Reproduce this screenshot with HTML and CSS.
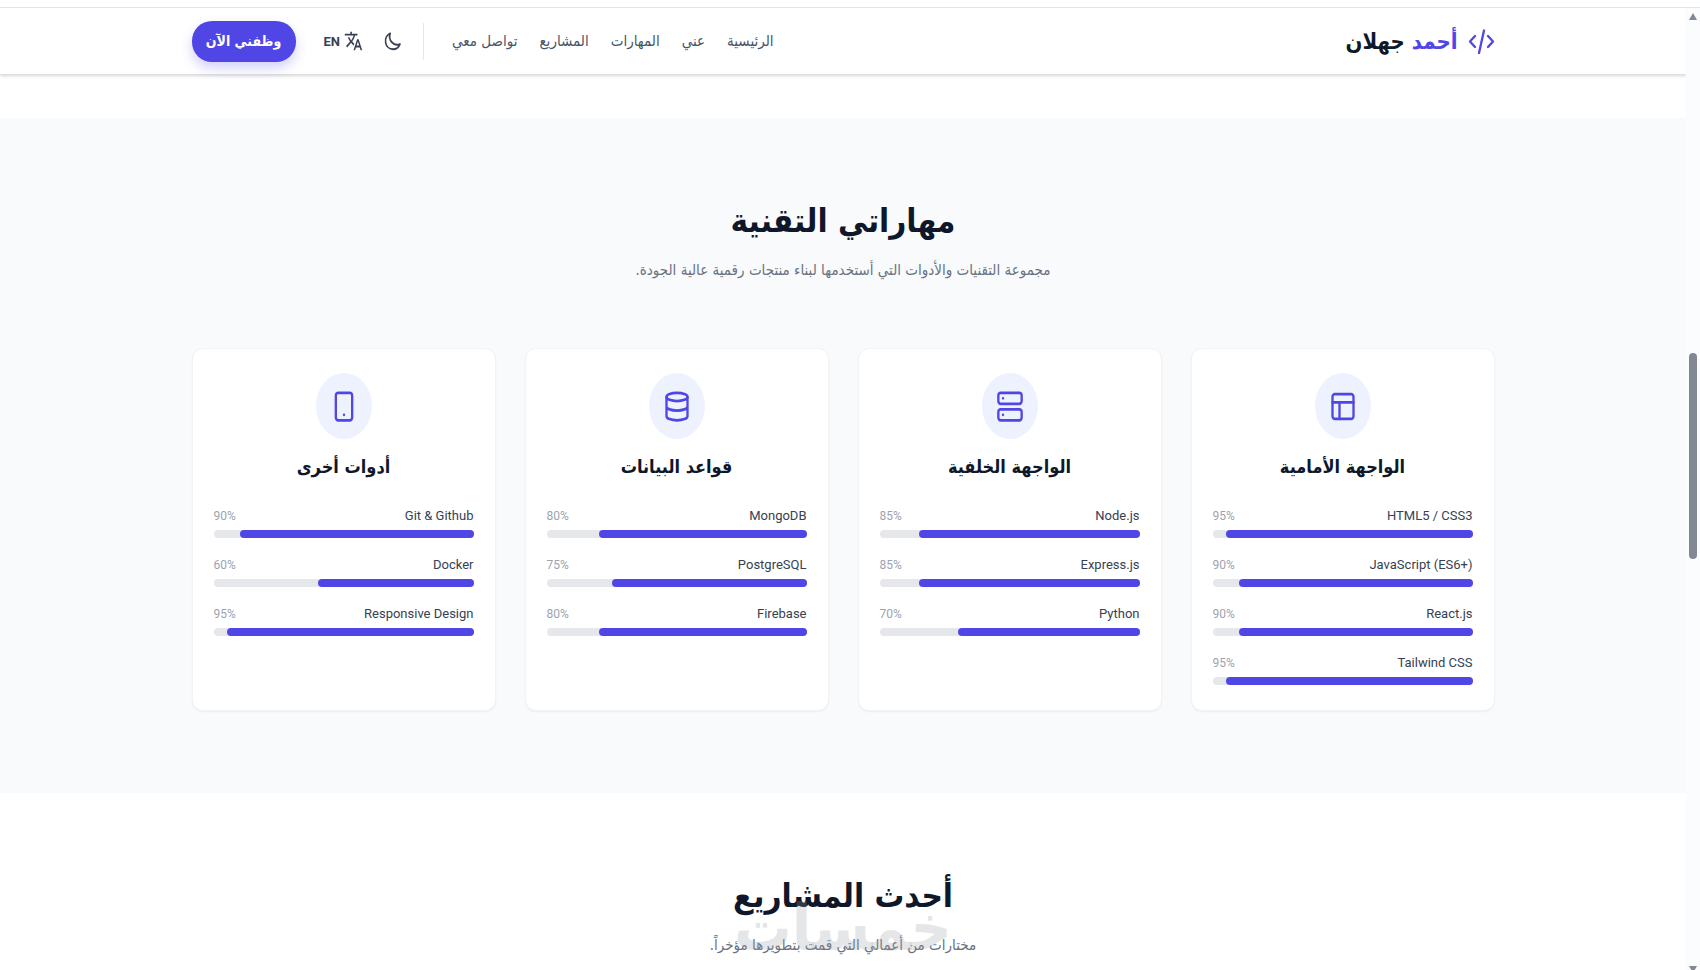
FILE: index.html
```
<!DOCTYPE html>
<html lang="ar" dir="rtl">
<head>
    <meta charset="UTF-8">
    <meta name="viewport" content="width=device-width, initial-scale=1.0">
    <title>أحمد جهلان</title>

    <link rel="stylesheet" href="styles.css">
</head>
<body>
    <div class="window-top"></div>

    <div class="window">
        <div class="page">
            <header class="header">
                <div class="container header-inner">
                    <a href="#" class="logo">
                        <svg class="logo-icon" viewBox="0 0 27 25" fill="none" stroke="currentColor" stroke-width="2.300" stroke-linecap="round" stroke-linejoin="round">
                            <path d="M7 7L2 12.500L7 18M20 7L25 12.500L20 18M16 1.500L11 24"/>
                        </svg>
                        <span><span class="logo-first">أحمد</span> جهلان</span>
                    </a>

                    <div class="header-left">
                        <nav class="nav">
                            <a href="#">الرئيسية</a>
                            <a href="#">عني</a>
                            <a href="#">المهارات</a>
                            <a href="#">المشاريع</a>
                            <a href="#">تواصل معي</a>
                        </nav>
                        <div class="tools">
                            <button type="button" class="icon-btn" aria-label="الوضع الليلي">
                                <svg class="moon" viewBox="0 0 24 24" fill="none" stroke="currentColor" stroke-width="2" stroke-linejoin="round" preserveAspectRatio="none">
                                    <path d="M20.354 15.354A9 9 0 0 1 8.646 3.646 9 9 0 0 0 12 21a9 9 0 0 0 8.354-5.646z"/>
                                </svg>
                            </button>
                            <button type="button" class="icon-btn">
                                <svg class="translate" viewBox="0 0 24 24" fill="currentColor" preserveAspectRatio="none">
                                    <path d="M12.870 15.070l-2.540-2.510.030-.030A17.520 17.520 0 0 0 14.070 6H17V4h-7V2H8v2H1v1.990h11.170C11.500 7.920 10.440 9.750 9 11.350 8.070 10.320 7.300 9.190 6.690 8h-2c.730 1.630 1.730 3.170 2.980 4.560l-5.090 5.020L4 19l5-5 3.110 3.110.760-2.040zM18.500 10h-2L12 22h2l1.120-3h4.750L21 22h2l-4.500-12zm-2.620 7l1.620-4.330L19.120 17h-3.240z"/>
                                </svg>
                                <span>EN</span>
                            </button>
                        </div>
                        <button type="button" class="hire-btn">وظفني الآن</button>
                    </div>
                </div>
            </header>

            <section class="skills">
                <div class="container">
                    <div class="section-head">
                        <h2>مهاراتي التقنية</h2>
                        <p>مجموعة التقنيات والأدوات التي أستخدمها لبناء منتجات رقمية عالية الجودة.</p>
                    </div>

                    <div class="cards">
                        <article class="card">
                            <div class="card-icon">
                                <svg viewBox="0 0 24 24" preserveAspectRatio="none">
                                    <rect x="3" y="3" width="18" height="18" rx="2"/>
                                    <path d="M3 9h18M9 9v12"/>
                                </svg>
                            </div>
                            <h3>الواجهة الأمامية</h3>
                            <ul class="skill-list">
                                <li>
                                    <div class="skill-label"><bdi>HTML5 / CSS3</bdi><bdi class="percent">95%</bdi></div>
                                    <div class="bar"><div class="bar-fill" style="width: 95%"></div></div>
                                </li>
                                <li>
                                    <div class="skill-label"><bdi>JavaScript (ES6+)</bdi><bdi class="percent">90%</bdi></div>
                                    <div class="bar"><div class="bar-fill" style="width: 90%"></div></div>
                                </li>
                                <li>
                                    <div class="skill-label"><bdi>React.js</bdi><bdi class="percent">90%</bdi></div>
                                    <div class="bar"><div class="bar-fill" style="width: 90%"></div></div>
                                </li>
                                <li>
                                    <div class="skill-label"><bdi>Tailwind CSS</bdi><bdi class="percent">95%</bdi></div>
                                    <div class="bar"><div class="bar-fill" style="width: 95%"></div></div>
                                </li>
                            </ul>
                        </article>

                        <article class="card">
                            <div class="card-icon">
                                <svg viewBox="0 0 24 24" preserveAspectRatio="none">
                                    <rect x="2" y="2" width="20" height="8" rx="2"/>
                                    <rect x="2" y="14" width="20" height="8" rx="2"/>
                                    <path d="M6 6h.01M6 18h.01"/>
                                </svg>
                            </div>
                            <h3>الواجهة الخلفية</h3>
                            <ul class="skill-list">
                                <li>
                                    <div class="skill-label"><bdi>Node.js</bdi><bdi class="percent">85%</bdi></div>
                                    <div class="bar"><div class="bar-fill" style="width: 85%"></div></div>
                                </li>
                                <li>
                                    <div class="skill-label"><bdi>Express.js</bdi><bdi class="percent">85%</bdi></div>
                                    <div class="bar"><div class="bar-fill" style="width: 85%"></div></div>
                                </li>
                                <li>
                                    <div class="skill-label"><bdi>Python</bdi><bdi class="percent">70%</bdi></div>
                                    <div class="bar"><div class="bar-fill" style="width: 70%"></div></div>
                                </li>
                            </ul>
                        </article>

                        <article class="card">
                            <div class="card-icon">
                                <svg viewBox="0 0 24 24" preserveAspectRatio="none">
                                    <ellipse cx="12" cy="5" rx="9" ry="3"/>
                                    <path d="M21 12c0 1.660-4 3-9 3s-9-1.340-9-3M3 5v14c0 1.660 4 3 9 3s9-1.340 9-3V5"/>
                                </svg>
                            </div>
                            <h3>قواعد البيانات</h3>
                            <ul class="skill-list">
                                <li>
                                    <div class="skill-label"><bdi>MongoDB</bdi><bdi class="percent">80%</bdi></div>
                                    <div class="bar"><div class="bar-fill" style="width: 80%"></div></div>
                                </li>
                                <li>
                                    <div class="skill-label"><bdi>PostgreSQL</bdi><bdi class="percent">75%</bdi></div>
                                    <div class="bar"><div class="bar-fill" style="width: 75%"></div></div>
                                </li>
                                <li>
                                    <div class="skill-label"><bdi>Firebase</bdi><bdi class="percent">80%</bdi></div>
                                    <div class="bar"><div class="bar-fill" style="width: 80%"></div></div>
                                </li>
                            </ul>
                        </article>

                        <article class="card">
                            <div class="card-icon">
                                <svg viewBox="0 0 24 24" preserveAspectRatio="none">
                                    <rect x="5" y="2" width="14" height="20" rx="2"/>
                                    <path d="M12 18h.01"/>
                                </svg>
                            </div>
                            <h3>أدوات أخرى</h3>
                            <ul class="skill-list">
                                <li>
                                    <div class="skill-label"><bdi>Git &amp; Github</bdi><bdi class="percent">90%</bdi></div>
                                    <div class="bar"><div class="bar-fill" style="width: 90%"></div></div>
                                </li>
                                <li>
                                    <div class="skill-label"><bdi>Docker</bdi><bdi class="percent">60%</bdi></div>
                                    <div class="bar"><div class="bar-fill" style="width: 60%"></div></div>
                                </li>
                                <li>
                                    <div class="skill-label"><bdi>Responsive Design</bdi><bdi class="percent">95%</bdi></div>
                                    <div class="bar"><div class="bar-fill" style="width: 95%"></div></div>
                                </li>
                            </ul>
                        </article>
                    </div>
                </div>
            </section>

            <section class="projects">
                <div class="container">
                    <div class="section-head">
                        <h2>أحدث المشاريع</h2>
                        <p>مختارات من أعمالي التي قمت بتطويرها مؤخراً.</p>
                        <span class="watermark">خمسات</span>
                    </div>
                </div>
            </section>
        </div>

        <div class="scrollbar">
            <span class="arrow arrow-up"></span>
            <span class="thumb"></span>
            <span class="arrow arrow-down"></span>
        </div>
    </div>
</body>
</html>
```

FILE: styles.css
```
*{margin: 0; padding: 0; box-sizing: border-box;}

body{
    height: 100vh;
    display: flex;
    flex-direction: column;
    overflow: hidden;
    background-color: #fff;
    color: #0f172a;
    font-family: "DejaVu Sans Condensed", "DejaVu Sans", sans-serif;
}

a{color: inherit; text-decoration: none;}
ul{list-style: none;}
button{border: none; background: none; font-family: inherit; cursor: pointer;}

.window-top{
    flex: none;
    height: 8px;
    border-bottom: 1px solid #e1e3e6;
}

.window{
    flex: 1;
    min-height: 0;
    display: flex;
    direction: ltr;
}

.page{
    flex: 1;
    direction: rtl;
    overflow: hidden;
}

.container{
    width: 100%;
    max-width: 1351px;
    margin: 0 auto;
    padding: 0 24px;
}

/* header */
.header{
    margin-bottom: 44px;
    box-shadow: 0 2px 3px rgba(0, 0, 0, 0.16);
}

.header-inner{
    height: 66px;
    display: flex;
    align-items: center;
    justify-content: space-between;
}

.logo{
    display: flex;
    align-items: center;
    gap: 10px;
    font-size: 22px;
    font-weight: bold;
}

.logo-icon{
    width: 27px;
    height: 25px;
    color: #4f46e5;
}

.logo-first{color: #4f46e5;}

.header-left{
    display: flex;
    align-items: center;
    gap: 28px;
}

.nav{
    display: flex;
    gap: 22px;
    font-size: 15px;
    color: #475569;
}

.tools{
    height: 37px;
    display: flex;
    align-items: center;
    gap: 20px;
    padding-right: 20px;
    border-right: 1px solid #e5e7eb;
}

.icon-btn{
    display: flex;
    align-items: center;
    gap: 4px;
    color: #374151;
    font-family: Roboto, sans-serif;
    font-size: 13px;
    font-weight: bold;
}

.moon{
    width: 20px;
    height: 22px;
}

.translate{
    width: 19px;
    height: 22px;
}

.hire-btn{
    width: 104px;
    height: 41px;
    border-radius: 20px;
    background-color: #4f46e5;
    color: #fff;
    font-size: 14px;
    font-weight: bold;
    box-shadow: 0 6px 12px rgba(79, 70, 229, 0.25);
}

/* sections */
.skills{
    padding: 77px 0 82px;
    background-color: #f8fafc;
}

.projects{padding-top: 77px;}

.section-head{
    position: relative;
    text-align: center;
}

.section-head h2{
    font-size: 33px;
    line-height: 52px;
}

.section-head p{
    margin-top: 9px;
    font-size: 15px;
    line-height: 28px;
    color: #6b7280;
}

.watermark{
    position: absolute;
    top: 16px;
    left: 0;
    right: 0;
    font-size: 64px;
    font-weight: bold;
    line-height: 84px;
    color: rgba(150, 155, 162, 0.25);
}

.cards{
    display: grid;
    grid-template-columns: repeat(4, 1fr);
    gap: 29px;
    margin-top: 64px;
}

.card{
    padding: 24px 21px;
    background-color: #fff;
    border: 1px solid #f1f3f6;
    border-radius: 11px;
    box-shadow: 0 1px 2px rgba(0, 0, 0, 0.05);
}

.card-icon{
    width: 56px;
    height: 66px;
    margin: 0 auto;
    display: flex;
    align-items: center;
    justify-content: center;
    border-radius: 50%;
    background-color: #eef2ff;
}

.card-icon svg{
    width: 28px;
    height: 33px;
    fill: none;
    stroke: #4f46e5;
    stroke-width: 2;
    stroke-linecap: round;
    stroke-linejoin: round;
}

.card h3{
    margin-top: 12px;
    font-size: 18px;
    line-height: 32px;
    text-align: center;
}

.skill-list{
    display: grid;
    gap: 16px;
    margin-top: 22px;
    padding-bottom: 1px;
}

.skill-label{
    display: flex;
    justify-content: space-between;
    margin-bottom: 3px;
    font-family: Roboto, sans-serif;
    font-size: 13px;
    line-height: 22px;
    color: #374151;
}

.percent{
    font-size: 12px;
    color: #9ca3af;
}

.bar{
    height: 8px;
    border-radius: 4px;
    background-color: #e5e7eb;
}

.bar-fill{
    height: 8px;
    border-radius: 4px;
    background-color: #4f46e5;
}

/* scrollbar */
.scrollbar{
    position: relative;
    width: 14px;
    background-color: #fbfcfd;
}

.arrow{
    position: absolute;
    left: 3px;
    border: 4px solid transparent;
}

.arrow-up{
    top: 1px;
    border-bottom: 7px solid #808893;
}

.arrow-down{
    bottom: -7px;
    border-top: 7px solid #808893;
}

.thumb{
    position: absolute;
    top: 345px;
    left: 3px;
    width: 8px;
    height: 206px;
    border-radius: 4px;
    background-color: #808893;
}
```
